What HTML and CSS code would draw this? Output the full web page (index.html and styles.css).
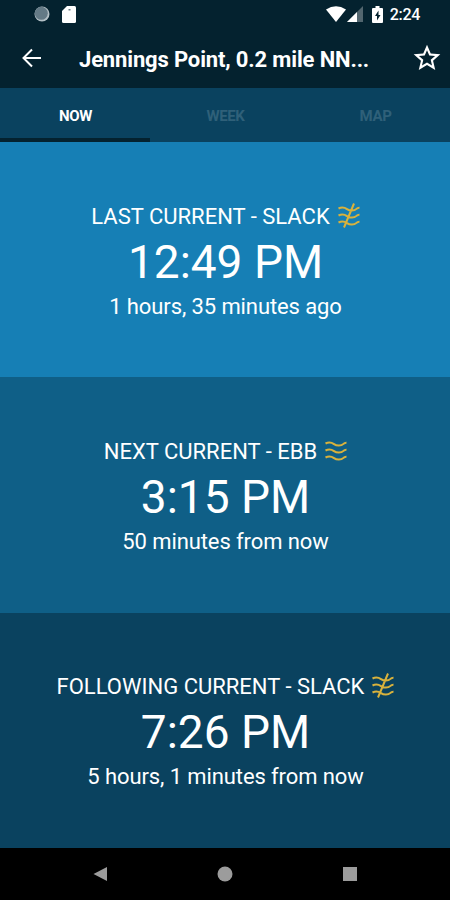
FILE: index.html
```html
<!DOCTYPE html>
<html lang="en">
<head>
  <meta charset="UTF-8" />
  <meta name="viewport" content="width=device-width, initial-scale=1" />
  <title>Jennings Point Currents</title>
  <link rel="stylesheet" href="styles.css">
</head>
<body>
  <!-- shared icons -->
  <svg class="defs" width="0" height="0">
    <symbol id="waves" viewBox="0 0 22 26">
      <path d="M.5 5.500c3-1.500 6-1.200 8.500.6s7 2.300 9.500-.2q1-1.300 3-1.200M.5 12.500c3-1.500 6-1.200 8.500.6s7 2.300 9.500-.2q1-1.300 3-1.200M.5 19.500c3-1.500 6-1.200 8.500.6s7 2.300 9.500-.2q1-1.300 3-1.200" />
    </symbol>
    <symbol id="slack" viewBox="0 0 22 26">
      <path d="M.5 5.500c3-1.500 6-1.200 8.500.6s7 2.300 9.500-.2q1-1.300 3-1.200M.5 12.500c3-1.500 6-1.200 8.500.6s7 2.300 9.500-.2q1-1.300 3-1.200M.5 19.500c3-1.500 6-1.200 8.500.6s7 2.300 9.500-.2q1-1.300 3-1.200M16 .5L6 24.500" />
    </symbol>
  </svg>

  <div class="status">
    <svg class="sync" width="16" height="16" viewBox="0 0 16 16">
      <circle cx="8" cy="8" r="7.500" fill="#b4c0c6" />
      <circle cx="7.300" cy="7.300" r="6.500" fill="#647a86" />
    </svg>
    <svg class="sd" width="14" height="17" viewBox="0 0 14 17">
      <path d="M5 0h7.500q1.500 0 1.500 1.500v14q0 1.500-1.500 1.500h-11q-1.500 0-1.500-1.500V5z" fill="#fff" />
      <path d="M6.500 3h2v1.500h-2z" fill="#6d7d85" />
    </svg>
    <svg class="wifi" width="20" height="16" viewBox="0 0 20 16">
      <path d="M0 3.500Q10-3 20 3.500L10 16z" fill="#fff" />
    </svg>
    <svg class="signal" width="16" height="16" viewBox="0 0 16 16">
      <path d="M16 0v16H0z" fill="#52666f" />
      <path d="M10 6v10H0z" fill="#fff" />
    </svg>
    <svg class="battery" width="11" height="17" viewBox="0 0 11 17">
      <path d="M3.500 0h4v2H10q1 0 1 1v13q0 1-1 1H1q-1 0-1-1V3q0-1 1-1h2.500z" fill="#fff" />
      <path d="M6.500 4.500L3 10h2v4.500L8.500 9H6.500z" fill="#04222f" />
    </svg>
    <span class="clock">2:24</span>
  </div>

  <div class="header">
    <svg class="back" width="20" height="20" viewBox="0 0 20 20">
      <path d="M19 10H2M10 1.500L1.500 10l8.500 8.500" fill="none" stroke="#fff" stroke-width="2" />
    </svg>
    <h1>Jennings Point, 0.2 mile NN...</h1>
    <svg class="star" width="32" height="32" viewBox="0 0 24 24">
      <path d="M22 9.240l-7.190-.62L12 2 9.190 8.630 2 9.240l5.460 4.730L5.820 21 12 17.270 18.180 21l-1.630-7.030L22 9.240zM12 15.400l-3.760 2.270 1-4.280-3.320-2.880 4.380-.38L12 6.100l1.710 4.040 4.380.38-3.320 2.880 1 4.280L12 15.400z" fill="#fff" />
    </svg>
  </div>

  <div class="tabs">
    <div class="tab active">NOW</div>
    <div class="tab">WEEK</div>
    <div class="tab">MAP</div>
  </div>

  <div class="card last">
    <div class="label">LAST CURRENT - SLACK <svg class="icon"><use href="#slack" /></svg></div>
    <div class="time">12:49 PM</div>
    <div class="away">1 hours, 35 minutes ago</div>
  </div>
  <div class="card next">
    <div class="label">NEXT CURRENT - EBB <svg class="icon"><use href="#waves" /></svg></div>
    <div class="time">3:15 PM</div>
    <div class="away">50 minutes from now</div>
  </div>
  <div class="card following">
    <div class="label">FOLLOWING CURRENT - SLACK <svg class="icon"><use href="#slack" /></svg></div>
    <div class="time">7:26 PM</div>
    <div class="away">5 hours, 1 minutes from now</div>
  </div>

  <div class="navbar">
    <svg width="16" height="16" viewBox="0 0 16 16"><path d="M15 1v14L1.500 8z" /></svg>
    <svg width="16" height="16" viewBox="0 0 16 16"><circle cx="8" cy="8" r="7.500" /></svg>
    <svg width="16" height="16" viewBox="0 0 16 16"><path d="M1 1h14v14H1z" /></svg>
  </div>
</body>
</html>
```
FILE: styles.css
```css
body {
  font-family: Roboto, sans-serif;
  background: #000;
  color: #fff;
  margin: 0;
  height: 900px;
  display: flex;
  flex-direction: column;
  overflow: hidden;
}
svg {
  display: block;
  flex: none;
}
.defs {
  height: 0;
}
.status {
  background: #04222f;
  height: 28px;
  display: flex;
  align-items: center;
  box-sizing: border-box;
  padding: 0 30px 0 34px;
}
.sd {
  margin-left: 12px;
}
.wifi {
  margin-left: auto;
}
.signal {
  margin-left: 1px;
}
.battery {
  margin: 0 7px 0 9px;
}
.clock {
  font-size: 16px;
  font-weight: 500;
  letter-spacing: -0.3px;
}
.header {
  background: #04222f;
  height: 60px;
  display: flex;
  align-items: center;
  box-sizing: border-box;
  padding: 0 7px 0 22px;
}
h1 {
  flex: 1;
  margin: 3px 0 0 37px;
  font-size: 22px;
  font-weight: 700;
  letter-spacing: -0.15px;
  white-space: nowrap;
}
.tabs {
  background: #0a425f;
  height: 54px;
  display: flex;
}
.tab {
  flex: 1;
  box-sizing: border-box;
  border-bottom: 4px solid transparent;
  padding: 6px 0 0 1px;
  display: flex;
  align-items: center;
  justify-content: center;
  font-size: 15px;
  font-weight: 700;
  letter-spacing: -0.4px;
  color: #2f6079;
}
.tab.active {
  color: #fff;
  border-bottom-color: #04222f;
}
.card {
  flex: 1;
  display: flex;
  flex-direction: column;
  align-items: center;
  justify-content: center;
  padding: 4px 0 0 1px;
}
.last {
  background: #167fb5;
}
.next {
  background: #0f5f87;
}
.following {
  background: #0a425f;
}
.label {
  display: flex;
  align-items: center;
  gap: 8px;
  font-size: 22px;
  line-height: 30px;
}
.icon {
  width: 22px;
  height: 26px;
  margin-bottom: 2px;
  fill: none;
  stroke: #d9b23c;
  stroke-width: 2;
}
.time {
  font-size: 46px;
  line-height: 61px;
}
.away {
  font-size: 22px;
  line-height: 27px;
  padding-bottom: 2px;
  letter-spacing: -0.1px;
}
.navbar {
  background: #000;
  height: 52px;
  display: flex;
  align-items: center;
  justify-content: space-between;
  box-sizing: border-box;
  padding: 0 92px;
  fill: #9c9c9c;
}
```
